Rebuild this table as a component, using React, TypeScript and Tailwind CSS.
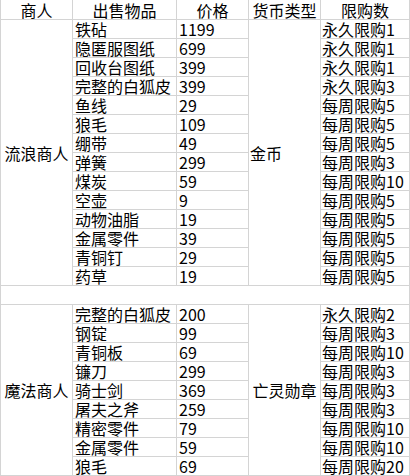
import React from "react"

const font = { fontFamily: '"Noto Sans CJK SC", "Noto Sans", sans-serif' }

const wander: [string, string, string][] = [
  ["铁砧", "1199", "永久限购1"],
  ["隐匿服图纸", "699", "永久限购1"],
  ["回收台图纸", "399", "永久限购1"],
  ["完整的白狐皮", "399", "永久限购3"],
  ["鱼线", "29", "每周限购5"],
  ["狼毛", "109", "每周限购5"],
  ["绷带", "49", "每周限购5"],
  ["弹簧", "299", "每周限购3"],
  ["煤炭", "59", "每周限购10"],
  ["空壶", "9", "每周限购5"],
  ["动物油脂", "19", "每周限购5"],
  ["金属零件", "39", "每周限购5"],
  ["青铜钉", "29", "每周限购5"],
  ["药草", "19", "每周限购5"],
]

const magic: [string, string, string][] = [
  ["完整的白狐皮", "200", "永久限购2"],
  ["钢锭", "99", "每周限购3"],
  ["青铜板", "69", "每周限购10"],
  ["镰刀", "299", "每周限购3"],
  ["骑士剑", "369", "每周限购3"],
  ["屠夫之斧", "259", "每周限购3"],
  ["精密零件", "79", "每周限购10"],
  ["金属零件", "59", "每周限购10"],
  ["狼毛", "69", "每周限购20"],
]

const cell = "border-r border-b border-[#d4d4d4] flex items-center whitespace-nowrap leading-[16px]"

function Rows({ items, startRow }: { items: [string, string, string][]; startRow: number }) {
  return (
    <>
      {items.map(([name, price, limit], i) => (
        <React.Fragment key={name + i}>
          <div className={`${cell} col-start-2 pl-[2px]`} style={{ gridRowStart: startRow + i }}>{name}</div>
          <div className={`${cell} col-start-3 pl-[2px]`} style={{ gridRowStart: startRow + i }}>{price}</div>
          <div className={`${cell} col-start-5 pl-[1px]`} style={{ gridRowStart: startRow + i }}>{limit}</div>
        </React.Fragment>
      ))}
    </>
  )
}

export default function App() {
  return (
    <div className="w-[410px] h-[476px] bg-white text-black overflow-hidden text-[16px]" style={font}>
      <div className="border-l border-[#d4d4d4] grid grid-cols-[72px_104px_72px_72px_89px] grid-rows-[20px_repeat(24,19px)]">
        {/* header */}
        <div className={`${cell} justify-center`}>商人</div>
        <div className={`${cell} justify-center`}>出售物品</div>
        <div className={`${cell} justify-center`}>价格</div>
        <div className={`${cell} justify-center`}>货币类型</div>
        <div className={`${cell} justify-center`}>限购数</div>

        {/* 流浪商人 */}
        <div className={`${cell} col-start-1 row-start-2 row-span-14 justify-center`}>流浪商人</div>
        <div className={`${cell} col-start-4 row-start-2 row-span-14 pl-[1px]`}>金币</div>
        <Rows items={wander} startRow={2} />

        {/* blank row */}
        <div className={`${cell} col-span-5 row-start-16 col-start-1`}></div>

        {/* 魔法商人 */}
        <div className={`${cell} col-start-1 row-start-17 row-span-9 justify-center`}>魔法商人</div>
        <div className={`${cell} col-start-4 row-start-17 row-span-9 justify-center`}>亡灵勋章</div>
        <Rows items={magic} startRow={17} />
      </div>
    </div>
  )
}
